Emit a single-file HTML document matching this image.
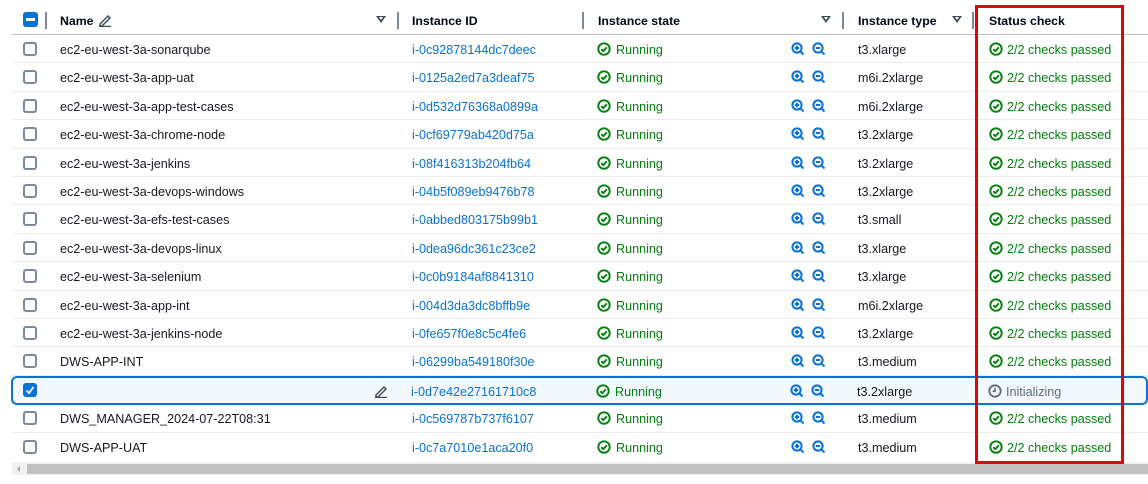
<!DOCTYPE html>
<html><head><meta charset="utf-8">
<style>
*{margin:0;padding:0;box-sizing:border-box}
body{width:1148px;height:484px;background:#fff;font-family:"Liberation Sans",sans-serif;font-size:12.6px;color:#16191f;position:relative;overflow:hidden}
.hdr{position:absolute;top:6px;left:12px;right:0;height:29px;border-bottom:1px solid #b6bec9}
.h{position:absolute;top:14px;font-weight:bold;color:#000716;font-size:12.3px;line-height:14px}
.sep{position:absolute;top:12px;width:2px;height:17px;background:#7d8998}
.tri{position:absolute;top:16px;width:0;height:0;border-left:5px solid transparent;border-right:5px solid transparent;border-top:7px solid #414d5c}
.tri::after{content:"";position:absolute;left:-2px;top:-6px;border-left:2px solid transparent;border-right:2px solid transparent;border-top:3px solid #fff}
.row{position:absolute;left:12px;right:0;height:28.4px;border-bottom:1px solid #e9ebed}
.row span{position:absolute;top:8px;line-height:14px;white-space:nowrap}
.cb{position:absolute;left:11px;top:7px;width:14px;height:14px;border:2px solid #7d8998;border-radius:3px;background:#fff}
.n{left:48px}
.id{left:400px;color:#0972d3}
.st{left:586px;color:#037f0c}
.ty{left:846px}
.sc{left:977px;color:#037f0c}
.ic{position:absolute;top:7px}
.sel{background:#f2f8fd;border:2px solid #0972d3;border-radius:6px;left:11px}
.red{position:absolute;left:975px;top:5px;width:149px;height:459px;border:3px solid #e8000b}
</style></head><body>
<div class="hdr"></div>
<div style="position:absolute;left:23px;top:12px;width:15px;height:15px;background:#0972d3;border-radius:3px"><div style="position:absolute;left:3px;top:6px;width:9px;height:3px;background:#fff"></div></div>
<div class="sep" style="left:45px"></div>
<div class="h" style="left:60px">Name</div>
<svg style="position:absolute;left:98px;top:13px" width="14" height="14" viewBox="0 0 14 14"><path d="M2 11 L10 3 L12 5 L4 13 L2 13 Z M1 13.5 H13" stroke="#414d5c" stroke-width="1.5" fill="none"/></svg>
<div class="tri" style="left:376px"></div>
<div class="sep" style="left:397px"></div>
<div class="h" style="left:412px">Instance ID</div>
<div class="sep" style="left:582px"></div>
<div class="h" style="left:598px">Instance state</div>
<div class="tri" style="left:821px"></div>
<div class="sep" style="left:842px"></div>
<div class="h" style="left:858px">Instance type</div>
<div class="tri" style="left:952px"></div>
<div class="sep" style="left:972px"></div>
<div class="h" style="left:989px">Status check</div>

<svg width="0" height="0" style="position:absolute"><defs>
<g id="ok"><circle cx="7" cy="7" r="5.7" fill="none" stroke="#037f0c" stroke-width="1.9"/><path d="M4.3 7.2 L6.3 9.1 L9.8 5.3" fill="none" stroke="#037f0c" stroke-width="1.9"/></g>
<g id="zi"><circle cx="6" cy="6" r="4.6" fill="none" stroke="#0972d3" stroke-width="2"/><path d="M9.3 9.3 L12.5 12.5 M3.8 6 H8.2 M6 3.8 V8.2" stroke="#0972d3" stroke-width="2"/></g>
<g id="zo"><circle cx="6" cy="6" r="4.6" fill="none" stroke="#0972d3" stroke-width="2"/><path d="M9.3 9.3 L12.5 12.5 M3.8 6 H8.2" stroke="#0972d3" stroke-width="2"/></g>
</defs></svg>

<div class="row" style="top:35px"><div class="cb"></div><span class="n">ec2-eu-west-3a-sonarqube</span><span class="id">i-0c92878144dc7deec</span><svg class="ic" style="left:585px" width="14" height="14"><use href="#ok"/></svg><span class="st" style="left:604px">Running</span><svg class="ic" style="left:779px" width="14" height="14"><use href="#zi"/></svg><svg class="ic" style="left:800px" width="14" height="14"><use href="#zo"/></svg><span class="ty">t3.xlarge</span><svg class="ic" style="left:977px" width="14" height="14"><use href="#ok"/></svg><span class="sc" style="left:995px">2/2 checks passed</span></div>
<div class="row" style="top:63.4px"><div class="cb"></div><span class="n">ec2-eu-west-3a-app-uat</span><span class="id">i-0125a2ed7a3deaf75</span><svg class="ic" style="left:585px" width="14" height="14"><use href="#ok"/></svg><span class="st" style="left:604px">Running</span><svg class="ic" style="left:779px" width="14" height="14"><use href="#zi"/></svg><svg class="ic" style="left:800px" width="14" height="14"><use href="#zo"/></svg><span class="ty">m6i.2xlarge</span><svg class="ic" style="left:977px" width="14" height="14"><use href="#ok"/></svg><span class="sc" style="left:995px">2/2 checks passed</span></div>
<div class="row" style="top:91.8px"><div class="cb"></div><span class="n">ec2-eu-west-3a-app-test-cases</span><span class="id">i-0d532d76368a0899a</span><svg class="ic" style="left:585px" width="14" height="14"><use href="#ok"/></svg><span class="st" style="left:604px">Running</span><svg class="ic" style="left:779px" width="14" height="14"><use href="#zi"/></svg><svg class="ic" style="left:800px" width="14" height="14"><use href="#zo"/></svg><span class="ty">m6i.2xlarge</span><svg class="ic" style="left:977px" width="14" height="14"><use href="#ok"/></svg><span class="sc" style="left:995px">2/2 checks passed</span></div>
<div class="row" style="top:120.2px"><div class="cb"></div><span class="n">ec2-eu-west-3a-chrome-node</span><span class="id">i-0cf69779ab420d75a</span><svg class="ic" style="left:585px" width="14" height="14"><use href="#ok"/></svg><span class="st" style="left:604px">Running</span><svg class="ic" style="left:779px" width="14" height="14"><use href="#zi"/></svg><svg class="ic" style="left:800px" width="14" height="14"><use href="#zo"/></svg><span class="ty">t3.2xlarge</span><svg class="ic" style="left:977px" width="14" height="14"><use href="#ok"/></svg><span class="sc" style="left:995px">2/2 checks passed</span></div>
<div class="row" style="top:148.6px"><div class="cb"></div><span class="n">ec2-eu-west-3a-jenkins</span><span class="id">i-08f416313b204fb64</span><svg class="ic" style="left:585px" width="14" height="14"><use href="#ok"/></svg><span class="st" style="left:604px">Running</span><svg class="ic" style="left:779px" width="14" height="14"><use href="#zi"/></svg><svg class="ic" style="left:800px" width="14" height="14"><use href="#zo"/></svg><span class="ty">t3.2xlarge</span><svg class="ic" style="left:977px" width="14" height="14"><use href="#ok"/></svg><span class="sc" style="left:995px">2/2 checks passed</span></div>
<div class="row" style="top:177px"><div class="cb"></div><span class="n">ec2-eu-west-3a-devops-windows</span><span class="id">i-04b5f089eb9476b78</span><svg class="ic" style="left:585px" width="14" height="14"><use href="#ok"/></svg><span class="st" style="left:604px">Running</span><svg class="ic" style="left:779px" width="14" height="14"><use href="#zi"/></svg><svg class="ic" style="left:800px" width="14" height="14"><use href="#zo"/></svg><span class="ty">t3.2xlarge</span><svg class="ic" style="left:977px" width="14" height="14"><use href="#ok"/></svg><span class="sc" style="left:995px">2/2 checks passed</span></div>
<div class="row" style="top:205.4px"><div class="cb"></div><span class="n">ec2-eu-west-3a-efs-test-cases</span><span class="id">i-0abbed803175b99b1</span><svg class="ic" style="left:585px" width="14" height="14"><use href="#ok"/></svg><span class="st" style="left:604px">Running</span><svg class="ic" style="left:779px" width="14" height="14"><use href="#zi"/></svg><svg class="ic" style="left:800px" width="14" height="14"><use href="#zo"/></svg><span class="ty">t3.small</span><svg class="ic" style="left:977px" width="14" height="14"><use href="#ok"/></svg><span class="sc" style="left:995px">2/2 checks passed</span></div>
<div class="row" style="top:233.8px"><div class="cb"></div><span class="n">ec2-eu-west-3a-devops-linux</span><span class="id">i-0dea96dc361c23ce2</span><svg class="ic" style="left:585px" width="14" height="14"><use href="#ok"/></svg><span class="st" style="left:604px">Running</span><svg class="ic" style="left:779px" width="14" height="14"><use href="#zi"/></svg><svg class="ic" style="left:800px" width="14" height="14"><use href="#zo"/></svg><span class="ty">t3.xlarge</span><svg class="ic" style="left:977px" width="14" height="14"><use href="#ok"/></svg><span class="sc" style="left:995px">2/2 checks passed</span></div>
<div class="row" style="top:262.2px"><div class="cb"></div><span class="n">ec2-eu-west-3a-selenium</span><span class="id">i-0c0b9184af8841310</span><svg class="ic" style="left:585px" width="14" height="14"><use href="#ok"/></svg><span class="st" style="left:604px">Running</span><svg class="ic" style="left:779px" width="14" height="14"><use href="#zi"/></svg><svg class="ic" style="left:800px" width="14" height="14"><use href="#zo"/></svg><span class="ty">t3.xlarge</span><svg class="ic" style="left:977px" width="14" height="14"><use href="#ok"/></svg><span class="sc" style="left:995px">2/2 checks passed</span></div>
<div class="row" style="top:290.6px"><div class="cb"></div><span class="n">ec2-eu-west-3a-app-int</span><span class="id">i-004d3da3dc8bffb9e</span><svg class="ic" style="left:585px" width="14" height="14"><use href="#ok"/></svg><span class="st" style="left:604px">Running</span><svg class="ic" style="left:779px" width="14" height="14"><use href="#zi"/></svg><svg class="ic" style="left:800px" width="14" height="14"><use href="#zo"/></svg><span class="ty">m6i.2xlarge</span><svg class="ic" style="left:977px" width="14" height="14"><use href="#ok"/></svg><span class="sc" style="left:995px">2/2 checks passed</span></div>
<div class="row" style="top:319px"><div class="cb"></div><span class="n">ec2-eu-west-3a-jenkins-node</span><span class="id">i-0fe657f0e8c5c4fe6</span><svg class="ic" style="left:585px" width="14" height="14"><use href="#ok"/></svg><span class="st" style="left:604px">Running</span><svg class="ic" style="left:779px" width="14" height="14"><use href="#zi"/></svg><svg class="ic" style="left:800px" width="14" height="14"><use href="#zo"/></svg><span class="ty">t3.2xlarge</span><svg class="ic" style="left:977px" width="14" height="14"><use href="#ok"/></svg><span class="sc" style="left:995px">2/2 checks passed</span></div>
<div class="row" style="top:347.4px"><div class="cb"></div><span class="n">DWS-APP-INT</span><span class="id">i-06299ba549180f30e</span><svg class="ic" style="left:585px" width="14" height="14"><use href="#ok"/></svg><span class="st" style="left:604px">Running</span><svg class="ic" style="left:779px" width="14" height="14"><use href="#zi"/></svg><svg class="ic" style="left:800px" width="14" height="14"><use href="#zo"/></svg><span class="ty">t3.medium</span><svg class="ic" style="left:977px" width="14" height="14"><use href="#ok"/></svg><span class="sc" style="left:995px">2/2 checks passed</span></div>
<div class="row sel" style="top:375.8px;height:29px"><div style="position:absolute;left:10px;top:5px;width:14px;height:14px;background:#0972d3;border-radius:3px"><svg width="14" height="14" style="position:absolute;left:0;top:0"><path d="M3.5 7.5 L6 10 L10.5 4" stroke="#fff" stroke-width="1.8" fill="none"/></svg></div>
<svg style="position:absolute;left:361px;top:6px" width="14" height="14" viewBox="0 0 14 14"><path d="M2 11 L10 3 L12 5 L4 13 L2 13 Z M1 13.5 H13" stroke="#414d5c" stroke-width="1.5" fill="none"/></svg>
<span class="id" style="left:398px;top:7px">i-0d7e42e27161710c8</span><svg class="ic" style="left:583px;top:6px" width="14" height="14"><use href="#ok"/></svg><span class="st" style="left:602px;top:7px">Running</span><svg class="ic" style="left:777px;top:6px" width="14" height="14"><use href="#zi"/></svg><svg class="ic" style="left:798px;top:6px" width="14" height="14"><use href="#zo"/></svg><span class="ty" style="left:844px;top:7px">t3.2xlarge</span><svg class="ic" style="left:975px;top:6px" width="14" height="14"><circle cx="7" cy="7" r="5.7" fill="none" stroke="#5f6b7a" stroke-width="1.8"/><path d="M7 3.8 V7.3 H4.6" stroke="#5f6b7a" stroke-width="1.6" fill="none"/></svg><span style="left:993px;top:7px;color:#5f6b7a">Initializing</span></div>
<div class="row" style="top:404.2px"><div class="cb"></div><span class="n">DWS_MANAGER_2024-07-22T08:31</span><span class="id">i-0c569787b737f6107</span><svg class="ic" style="left:585px" width="14" height="14"><use href="#ok"/></svg><span class="st" style="left:604px">Running</span><svg class="ic" style="left:779px" width="14" height="14"><use href="#zi"/></svg><svg class="ic" style="left:800px" width="14" height="14"><use href="#zo"/></svg><span class="ty">t3.medium</span><svg class="ic" style="left:977px" width="14" height="14"><use href="#ok"/></svg><span class="sc" style="left:995px">2/2 checks passed</span></div>
<div class="row" style="top:432.6px;border-bottom:none"><div class="cb"></div><span class="n">DWS-APP-UAT</span><span class="id">i-0c7a7010e1aca20f0</span><svg class="ic" style="left:585px" width="14" height="14"><use href="#ok"/></svg><span class="st" style="left:604px">Running</span><svg class="ic" style="left:779px" width="14" height="14"><use href="#zi"/></svg><svg class="ic" style="left:800px" width="14" height="14"><use href="#zo"/></svg><span class="ty">t3.medium</span><svg class="ic" style="left:977px" width="14" height="14"><use href="#ok"/></svg><span class="sc" style="left:995px">2/2 checks passed</span></div>

<div style="position:absolute;left:12px;top:462px;width:1136px;height:13px;background:#f1f1f1"></div>
<div style="position:absolute;left:17px;top:466px;width:0;height:0;border-top:3px solid transparent;border-bottom:3px solid transparent;border-right:3px solid #a3a3a3"></div>
<div style="position:absolute;left:27px;top:464px;width:1121px;height:10px;background:#c1c1c1"></div>
<div class="red"></div>
</body></html>
